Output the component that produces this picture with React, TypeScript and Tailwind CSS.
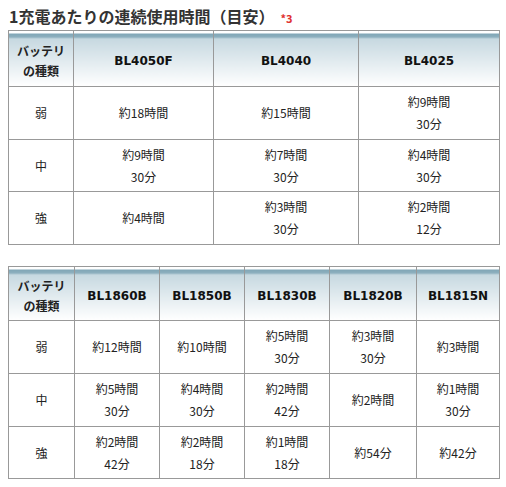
import React from "react";

const headerBg =
  "bg-[linear-gradient(to_bottom,#ffffff_0px,#ffffff_2px,#7fa5b5_2px,#8fb1bf_6px,#c6d8e0_7px,#ffffff_100%)]";

function Cell({ lines }: { lines: string[] }) {
  return (
    <td className="border border-[#999999] text-center align-middle text-[12px] leading-[22px] text-[#222222]">
      {lines.map((l, i) => (
        <div key={i}>{l}</div>
      ))}
    </td>
  );
}

function ModelHead({ name, w }: { name: string; w: string }) {
  return (
    <th
      className={`border border-[#999999] ${headerBg} ${w} text-center align-middle text-[12px] font-bold text-[#111111] pt-[4px] font-['DejaVu_Sans',sans-serif]`}
    >
      {name}
    </th>
  );
}

function RowLabel({ t }: { t: string }) {
  return (
    <td className="border border-[#999999] text-center align-middle text-[12px] text-[#222222]">
      {t}
    </td>
  );
}

function LabelHead({ w }: { w: string }) {
  return (
    <th
      className={`border border-[#999999] ${headerBg} ${w} text-center align-middle text-[12px] font-bold leading-[20px] text-[#222222] pt-[4px]`}
    >
      <div>バッテリ</div>
      <div>の種類</div>
    </th>
  );
}

type Row = { label: string; cells: string[][]; h: string };

function DataTable({
  models,
  widths,
  labelW,
  headH,
  rows,
}: {
  models: string[];
  widths: string[];
  labelW: string;
  headH: string;
  rows: Row[];
}) {
  return (
    <table className="ml-[8px] border-collapse table-fixed">
      <thead>
        <tr className={headH}>
          <LabelHead w={labelW} />
          {models.map((m, i) => (
            <ModelHead key={m} name={m} w={widths[i]} />
          ))}
        </tr>
      </thead>
      <tbody>
        {rows.map((r) => (
          <tr key={r.label} className={r.h}>
            <RowLabel t={r.label} />
            {r.cells.map((c, i) => (
              <Cell key={i} lines={c} />
            ))}
          </tr>
        ))}
      </tbody>
    </table>
  );
}

export default function App() {
  return (
    <div className="w-[506px] h-[487px] bg-white font-['Noto_Sans_CJK_JP',sans-serif] text-[#333333]">
      <div className="pt-[4px] pl-[9px] h-[30px] flex items-baseline">
        <span className="text-[16px] font-bold text-[#333333]">
          1充電あたりの連続使用時間（目安）
        </span>
        <span className="ml-[6px] text-[11px] font-bold text-[#e03030]">
          *3
        </span>
      </div>
      <DataTable
        models={["BL4050F", "BL4040", "BL4025"]}
        widths={["w-[140px]", "w-[145px]", "w-[141px]"]}
        labelW="w-[65px]"
        headH="h-[56px]"
        rows={[
          { label: "弱", h: "h-[53px]", cells: [["約18時間"], ["約15時間"], ["約9時間", "30分"]] },
          { label: "中", h: "h-[52px]", cells: [["約9時間", "30分"], ["約7時間", "30分"], ["約4時間", "30分"]] },
          { label: "強", h: "h-[53px]", cells: [["約4時間"], ["約3時間", "30分"], ["約2時間", "12分"]] },
        ]}
      />
      <div className="h-[21px]" />
      <DataTable
        models={["BL1860B", "BL1850B", "BL1830B", "BL1820B", "BL1815N"]}
        widths={["w-[85px]", "w-[85px]", "w-[85px]", "w-[87px]", "w-[83px]"]}
        labelW="w-[66px]"
        headH="h-[54px]"
        rows={[
          { label: "弱", h: "h-[53px]", cells: [["約12時間"], ["約10時間"], ["約5時間", "30分"], ["約3時間", "30分"], ["約3時間"]] },
          { label: "中", h: "h-[53px]", cells: [["約5時間", "30分"], ["約4時間", "30分"], ["約2時間", "42分"], ["約2時間"], ["約1時間", "30分"]] },
          { label: "強", h: "h-[52px]", cells: [["約2時間", "42分"], ["約2時間", "18分"], ["約1時間", "18分"], ["約54分"], ["約42分"]] },
        ]}
      />
    </div>
  );
}
